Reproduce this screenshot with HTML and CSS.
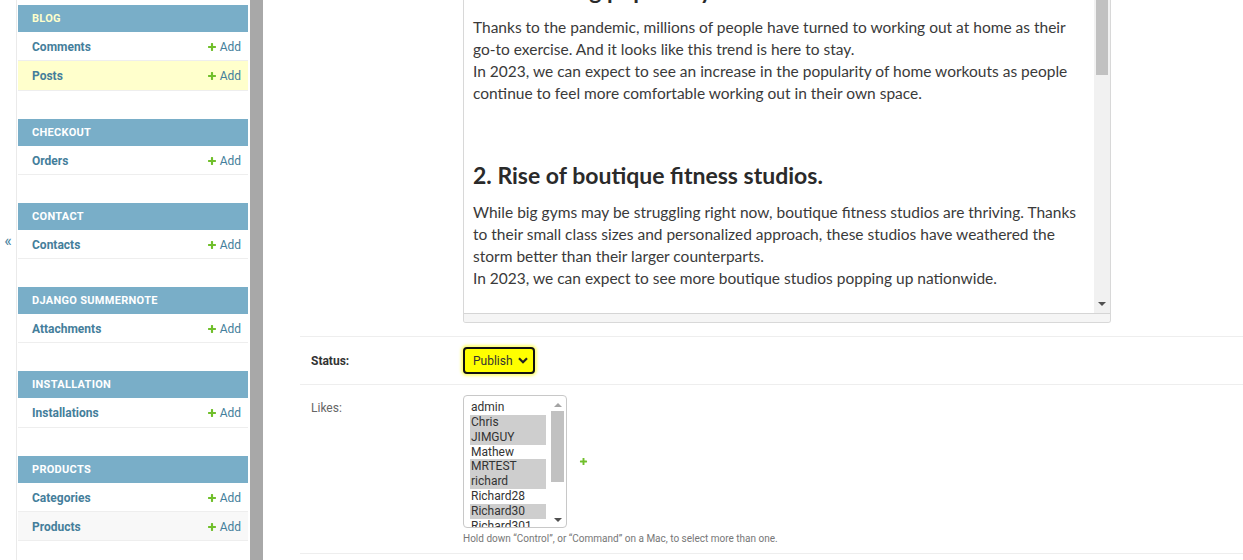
FILE: index.html
```html
<!DOCTYPE html>
<html lang="en">
<head>
<meta charset="utf-8">
<title>Change post | Django site admin</title>
<link rel="stylesheet" href="styles.css">
</head>
<body>
<div class="layout">
  <button class="toggle" type="button">«</button>

  <nav class="sidebar">
    <div class="module">
      <div class="caption current">Blog</div>
      <div class="row"><a class="model">Comments</a><a class="add"><svg viewBox="0 0 1792 1792"><path d="M1600 796v192q0 40-28 68t-68 28h-416v416q0 40-28 68t-68 28h-192q-40 0-68-28t-28-68v-416h-416q-40 0-68-28t-28-68v-192q0-40 28-68t68-28h416v-416q0-40 28-68t68-28h192q40 0 68 28t28 68v416h416q40 0 68 28t28 68z"/></svg>Add</a></div>
      <div class="row current-model"><a class="model">Posts</a><a class="add"><svg viewBox="0 0 1792 1792"><path d="M1600 796v192q0 40-28 68t-68 28h-416v416q0 40-28 68t-68 28h-192q-40 0-68-28t-28-68v-416h-416q-40 0-68-28t-28-68v-192q0-40 28-68t68-28h416v-416q0-40 28-68t68-28h192q40 0 68 28t28 68v416h416q40 0 68 28t28 68z"/></svg>Add</a></div>
    </div>
    <div class="module">
      <div class="caption">Checkout</div>
      <div class="row"><a class="model">Orders</a><a class="add"><svg viewBox="0 0 1792 1792"><path d="M1600 796v192q0 40-28 68t-68 28h-416v416q0 40-28 68t-68 28h-192q-40 0-68-28t-28-68v-416h-416q-40 0-68-28t-28-68v-192q0-40 28-68t68-28h416v-416q0-40 28-68t68-28h192q40 0 68 28t28 68v416h416q40 0 68 28t28 68z"/></svg>Add</a></div>
    </div>
    <div class="module">
      <div class="caption">Contact</div>
      <div class="row"><a class="model">Contacts</a><a class="add"><svg viewBox="0 0 1792 1792"><path d="M1600 796v192q0 40-28 68t-68 28h-416v416q0 40-28 68t-68 28h-192q-40 0-68-28t-28-68v-416h-416q-40 0-68-28t-28-68v-192q0-40 28-68t68-28h416v-416q0-40 28-68t68-28h192q40 0 68 28t28 68v416h416q40 0 68 28t28 68z"/></svg>Add</a></div>
    </div>
    <div class="module">
      <div class="caption">Django Summernote</div>
      <div class="row"><a class="model">Attachments</a><a class="add"><svg viewBox="0 0 1792 1792"><path d="M1600 796v192q0 40-28 68t-68 28h-416v416q0 40-28 68t-68 28h-192q-40 0-68-28t-28-68v-416h-416q-40 0-68-28t-28-68v-192q0-40 28-68t68-28h416v-416q0-40 28-68t68-28h192q40 0 68 28t28 68v416h416q40 0 68 28t28 68z"/></svg>Add</a></div>
    </div>
    <div class="module">
      <div class="caption">Installation</div>
      <div class="row"><a class="model">Installations</a><a class="add"><svg viewBox="0 0 1792 1792"><path d="M1600 796v192q0 40-28 68t-68 28h-416v416q0 40-28 68t-68 28h-192q-40 0-68-28t-28-68v-416h-416q-40 0-68-28t-28-68v-192q0-40 28-68t68-28h416v-416q0-40 28-68t68-28h192q40 0 68 28t28 68v416h416q40 0 68 28t28 68z"/></svg>Add</a></div>
    </div>
    <div class="module">
      <div class="caption">Products</div>
      <div class="row"><a class="model">Categories</a><a class="add"><svg viewBox="0 0 1792 1792"><path d="M1600 796v192q0 40-28 68t-68 28h-416v416q0 40-28 68t-68 28h-192q-40 0-68-28t-28-68v-416h-416q-40 0-68-28t-28-68v-192q0-40 28-68t68-28h416v-416q0-40 28-68t68-28h192q40 0 68 28t28 68v416h416q40 0 68 28t28 68z"/></svg>Add</a></div>
      <div class="row hover"><a class="model">Products</a><a class="add"><svg viewBox="0 0 1792 1792"><path d="M1600 796v192q0 40-28 68t-68 28h-416v416q0 40-28 68t-68 28h-192q-40 0-68-28t-28-68v-416h-416q-40 0-68-28t-28-68v-192q0-40 28-68t68-28h416v-416q0-40 28-68t68-28h192q40 0 68 28t28 68v416h416q40 0 68 28t28 68z"/></svg>Add</a></div>
    </div>
  </nav>

  <div class="side-scroll"></div>

  <main class="main">
    <div class="editor-row">
      <div class="editor">
        <div class="editable">
          <div class="doc">
            <h2 class="doc-h cut">1. Increasing popularity of home workouts.</h2>
            <p class="doc-p">Thanks to the pandemic, millions of people have turned to working out at home as their<br>go-to exercise. And it looks like this trend is here to stay.<br>In 2023, we can expect to see an increase in the popularity of home workouts as people<br>continue to feel more comfortable working out in their own space.</p>
            <h2 class="doc-h">2. Rise of boutique fitness studios.</h2>
            <p class="doc-p">While big gyms may be struggling right now, boutique fitness studios are thriving. Thanks<br>to their small class sizes and personalized approach, these studios have weathered the<br>storm better than their larger counterparts.<br>In 2023, we can expect to see more boutique studios popping up nationwide.</p>
          </div>
          <div class="vscroll">
            <div class="vthumb"></div>
            <div class="vtrack"></div>
            <span class="varrow"></span>
          </div>
        </div>
        <div class="statusbar"></div>
      </div>
    </div>

    <div class="form-row status-row">
      <label class="label required">Status:</label>
      <div class="status-select">
        <span>Publish</span>
        <svg class="chev" viewBox="0 0 10 7"><path d="M1 1.2 L5 5.2 L9 1.2" fill="none" stroke="#222" stroke-width="2.2"/></svg>
      </div>
    </div>

    <div class="form-row likes-row">
      <label class="label">Likes:</label>
      <div class="field">
        <div class="field-line">
          <div class="multi">
            <ul class="options">
              <li>admin</li>
              <li class="sel">Chris</li>
              <li class="sel">JIMGUY</li>
              <li>Mathew</li>
              <li class="sel">MRTEST</li>
              <li class="sel">richard</li>
              <li>Richard28</li>
              <li class="sel">Richard30</li>
              <li>Richard301</li>
            </ul>
            <div class="mscroll">
              <span class="up"></span>
              <div class="mthumb"></div>
              <span class="down"></span>
            </div>
          </div>
          <a class="related-add"><svg viewBox="0 0 1792 1792"><path d="M1600 796v192q0 40-28 68t-68 28h-416v416q0 40-28 68t-68 28h-192q-40 0-68-28t-28-68v-416h-416q-40 0-68-28t-28-68v-192q0-40 28-68t68-28h416v-416q0-40 28-68t68-28h192q40 0 68 28t28 68v416h416q40 0 68 28t28 68z"/></svg></a>
        </div>
        <div class="help">Hold down “Control”, or “Command” on a Mac, to select more than one.</div>
      </div>
    </div>
  </main>
</div>
</body>
</html>
```

FILE: styles.css
```css
* { box-sizing: border-box; }

html, body {
  margin: 0;
  padding: 0;
  height: 560px;
  overflow: hidden;
  background: #fff;
  font-family: Roboto, "Liberation Sans", Arial, sans-serif;
  color: #333;
}

.layout {
  display: flex;
  height: 560px;
}

.toggle {
  width: 16px;
  flex: none;
  border: 0;
  background: #fff;
  color: #447e9b;
  font-family: Roboto, sans-serif;
  font-size: 16px;
  padding: 232px 0 0 0;
  margin: 0;
  display: flex;
  justify-content: center;
  align-items: flex-start;
  line-height: 18px;
}

.sidebar {
  width: 232px;
  flex: none;
  border-left: 1px solid #eaeaea;
  padding: 5px 0 0 1px;
}

.module {
  margin-bottom: 28px;
}

.caption {
  height: 27px;
  background: #79aec8;
  color: #fff;
  font-size: 11px;
  font-weight: 700;
  letter-spacing: 0.3px;
  text-transform: uppercase;
  padding-left: 14px;
  display: flex;
  align-items: center;
}

.caption.current {
  color: #ffffcc;
}

.row {
  height: 29.25px;
  border-bottom: 1px solid #eee;
  display: flex;
  align-items: center;
  justify-content: space-between;
  padding: 2px 7px 0 14px;
  font-size: 12px;
}

.row.current-model { background: #ffffcc; }
.row.hover { background: #f8f8f8; }

.model {
  color: #447e9b;
  font-weight: 700;
}

.add {
  color: #447e9b;
  display: flex;
  align-items: center;
  gap: 3px;
}

.add svg {
  width: 10px;
  height: 10px;
  fill: #70bf2b;
}

.side-scroll {
  width: 13px;
  flex: none;
  margin-left: 2px;
  background: #a8a8a8;
}

.main {
  flex: 1;
  min-width: 0;
  padding-left: 37px;
}

.editor-row {
  padding: 0 0 13px 163px;
  border-bottom: 1px solid #eee;
}

.editor {
  width: 648px;
  border: 1px solid #d8d8d8;
  border-top: 0;
  border-radius: 0 0 3px 3px;
  overflow: hidden;
}

.editable {
  display: flex;
  height: 313px;
}

.doc {
  flex: 1;
  min-width: 0;
  overflow: hidden;
  padding: 0 0 0 9px;
  font-family: Lato, "Open Sans", sans-serif;
  color: #3a3a3a;
  white-space: nowrap;
}

.doc-h {
  font-size: 23px;
  font-weight: 700;
  line-height: 30px;
  color: #2a2a2a;
  margin: 0;
}

.doc-h.cut {
  margin-top: -25px;
}

.doc-p {
  font-size: 15.5px;
  line-height: 22px;
  margin: 10px 0 56px 0;
}

.doc-p + .doc-h { margin-top: 0; }
.doc-h + .doc-p { margin-top: 11px; }

.vscroll {
  width: 16px;
  flex: none;
  background: #f1f1f1;
  display: flex;
  flex-direction: column;
  align-items: center;
  padding-bottom: 7px;
}

.vthumb {
  width: 12px;
  height: 75px;
  background: #c1c1c1;
}

.vtrack { flex: 1; }

.varrow {
  width: 0;
  height: 0;
  border-left: 4px solid transparent;
  border-right: 4px solid transparent;
  border-top: 4px solid #505050;
}

.statusbar {
  height: 9px;
  background: #f5f5f5;
  border-top: 1px solid #d5d5d5;
}

.form-row {
  display: flex;
  border-bottom: 1px solid #eee;
}

.label {
  width: 163px;
  flex: none;
  padding-left: 11px;
  font-size: 12px;
}

.status-row {
  height: 48px;
  align-items: center;
}

.status-row .label {
  font-weight: 700;
  color: #333;
}

.status-select {
  width: 72px;
  height: 27px;
  background: #ffff00;
  border: 2px solid #111;
  border-radius: 4px;
  box-shadow: 0 0 3px 2px rgba(255, 255, 0, 0.55);
  display: flex;
  align-items: center;
  justify-content: space-between;
  padding: 0 5px 0 8px;
  font-size: 12px;
  color: #333;
}

.chev {
  width: 10px;
  height: 7px;
}

.likes-row {
  height: 169px;
  padding-top: 10px;
}

.likes-row .label {
  color: #666;
  padding-top: 6px;
}

.field-line {
  display: flex;
  align-items: center;
  gap: 12px;
}

.multi {
  width: 104px;
  height: 133px;
  border: 1px solid #c8c8c8;
  border-radius: 4px;
  display: flex;
  overflow: hidden;
  padding: 4px 0 0 6px;
}

.options {
  list-style: none;
  margin: 0;
  padding: 0;
  width: 76px;
  flex: none;
  overflow: hidden;
  font-size: 12px;
  color: #333;
}

.options li {
  height: 14.85px;
  line-height: 14.85px;
  padding-left: 1px;
}

.options li.sel { background: #cecece; }

.mscroll {
  margin-left: 3px;
  width: 17px;
  display: flex;
  flex-direction: column;
  align-items: center;
  margin-top: -4px;
  padding: 7px 0 5px;
}

.mscroll .up {
  width: 0;
  height: 0;
  border-left: 4px solid transparent;
  border-right: 4px solid transparent;
  border-bottom: 4px solid #a3a3a3;
}

.mthumb {
  width: 13px;
  height: 71px;
  background: #c1c1c1;
  margin-top: 4px;
  margin-bottom: auto;
}

.mscroll .down {
  width: 0;
  height: 0;
  border-left: 4px solid transparent;
  border-right: 4px solid transparent;
  border-top: 4px solid #505050;
}

.related-add svg {
  width: 9px;
  height: 9px;
  fill: #70bf2b;
  display: block;
}

.help {
  font-size: 10px;
  color: #777;
  margin-top: 5px;
}
```
